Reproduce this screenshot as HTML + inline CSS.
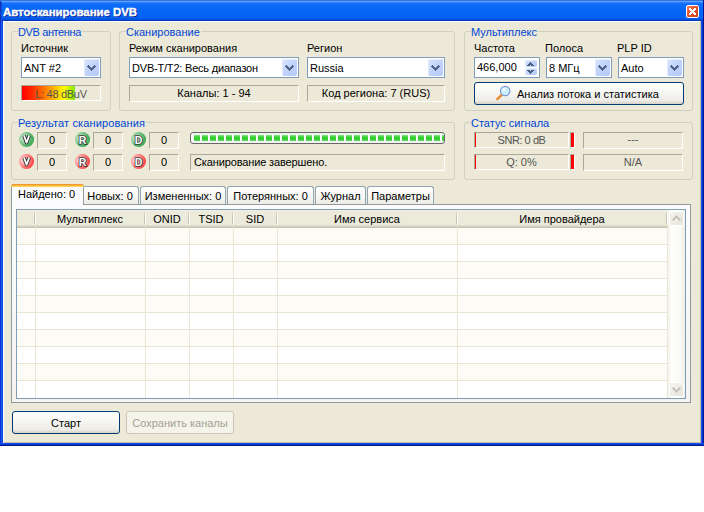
<!DOCTYPE html><html><head><meta charset="utf-8"><style>
*{margin:0;padding:0;box-sizing:border-box}
html,body{width:704px;height:512px;background:#fff;overflow:hidden;font-family:"Liberation Sans",sans-serif;font-size:11px;color:#000}
.a{position:absolute}
#win{position:absolute;left:0;top:0;width:704px;height:446px;background:#ECE9D8}
#title{left:0;top:0;width:704px;height:21px;background:linear-gradient(#3272E4 0,#3272E4 1px,#5FA2FA 1px,#5FA2FA 2px,#3585FA 2px,#0D6CF8 4px,#0866F6 10px,#0562F2 17px,#0558EA 19px,#0044CC 20px,#0038B4 21px)}
#ttext{left:3px;top:5px;font-weight:bold;font-size:11.4px;color:#fff;text-shadow:1px 1px 0 #0A1C8C;white-space:nowrap;line-height:14px;-webkit-text-stroke:0.35px #fff}
.grp{position:absolute;border:1px solid #D0D0BF;border-radius:3px}
.lg{position:absolute;color:#0046D5;background:#ECE9D8;padding:0 1px 0 0;white-space:nowrap;line-height:13px}
.lbl{position:absolute;white-space:nowrap;line-height:13px}
.combo{position:absolute;border:1px solid #7F9DB9;background:#fff}
.combo .t{position:absolute;left:2px;top:4px;white-space:nowrap;line-height:13px}
.dd{position:absolute;right:1px;top:1px;width:15px;height:17px;border-radius:2px;background:linear-gradient(135deg,#DCE6FD 0,#C3D4FB 45%,#B4CAF8 100%);box-shadow:inset 1px 1px 0 #E2EAFD}
.sunk{position:absolute;border-top:1px solid #ACA899;border-left:1px solid #ACA899;border-right:1px solid #fff;border-bottom:1px solid #fff}
.ct{text-align:center;white-space:nowrap;line-height:13px}
.btn{position:absolute;border:1px solid #003C74;border-radius:3px;background:linear-gradient(#FFFFFF 0,#F7F7F4 40%,#ECEBE6 85%,#D6D0C5 100%);text-align:center;white-space:nowrap}
.tab{position:absolute;border:1px solid #91A5B2;border-bottom:none;border-radius:3px 3px 0 0;background:linear-gradient(#FFFFFF 0,#F7F6F2 60%,#ECEBE5 100%);white-space:nowrap;line-height:13px}
</style></head><body><div id="win">
<div class="a" id="title"></div><div class="a" id="ttext">Автосканирование DVB</div>
<div class="a" style="left:686px;top:5px;width:13px;height:13px;border:1px solid #fff;border-radius:2px;background:linear-gradient(135deg,#F08060 0,#E2582E 40%,#CF3E1C 100%)"></div>
<svg class="a" style="left:689px;top:8px" width="7" height="7" viewBox="0 0 7 7"><path d="M0 0h2v1h1v1h1v-1h1v-1h2v2h-1v1h-1v1h1v1h1v2h-2v-1h-1v-1h-1v1h-1v1h-2v-2h1v-1h1v-1h-1v-1h-1z" fill="#fff"/></svg>
<div class="a" style="left:0px;top:1px;width:1px;height:20px;background:#1434B8"></div>
<div class="a" style="left:1px;top:2px;width:1px;height:19px;background:#0C50E0"></div>
<div class="a" style="left:0px;top:21px;width:1px;height:425px;background:#0A30D8"></div>
<div class="a" style="left:1px;top:21px;width:1px;height:425px;background:#1A62F0"></div>
<div class="a" style="left:2px;top:21px;width:1px;height:425px;background:#0A44E4"></div>
<div class="a" style="left:3px;top:21px;width:1px;height:422px;background:#fff"></div>
<div class="a" style="left:3px;top:21px;width:697px;height:1px;background:#fff"></div>
<div class="a" style="left:700px;top:21px;width:1px;height:422px;background:#C3BB9E"></div>
<div class="a" style="left:4px;top:442px;width:697px;height:1px;background:#C3BB9E"></div>
<div class="a" style="left:701px;top:21px;width:1px;height:425px;background:#1650F0"></div>
<div class="a" style="left:702px;top:21px;width:1px;height:425px;background:#0838C8"></div>
<div class="a" style="left:703px;top:0px;width:1px;height:446px;background:#00159A"></div>
<div class="a" style="left:0px;top:443px;width:704px;height:1px;background:#1050F0"></div>
<div class="a" style="left:0px;top:444px;width:704px;height:1px;background:#0838C8"></div>
<div class="a" style="left:0px;top:445px;width:704px;height:1px;background:#001A90"></div>
<div class="grp" style="left:11px;top:31px;width:100px;height:80px"></div><div class="lg" style="left:18px;top:26px"><span style="letter-spacing:-.38px">DVB антенна</span></div>
<div class="lbl" style="left:21px;top:42px;">Источник</div>
<div class="combo" style="left:21px;top:57px;width:80px;height:21px"><div class="t" style="top:4px">ANT #2</div><div class="dd"><svg width="9" height="6" style="position:absolute;left:3px;top:6px"><path d="M1 0h1v1h-1zM7 0h1v1h-1zM0 1h3v1h-3zM6 1h3v1h-3zM1 2h3v1h-3zM5 2h3v1h-3zM2 3h5v1h-5zM3 4h3v1h-3zM4 5h1v1h-1z" fill="#4D6185"/></svg></div></div>
<div class="sunk" style="left:21px;top:85px;width:80px;height:16px;"><div class="a" style="left:0;top:0;width:53px;height:14px;background:linear-gradient(90deg,#FF0000 0,#FF2800 18%,#FF9000 50%,#FFFF00 80%,#80E800 100%)"></div><div class="a ct" style="left:0;top:2px;width:78px;color:#545454;letter-spacing:-.3px">L: 48 dBuV</div></div>
<div class="grp" style="left:119px;top:31px;width:336px;height:80px"></div><div class="lg" style="left:126px;top:26px">Сканирование</div>
<div class="lbl" style="left:129px;top:42px;">Режим сканирования</div>
<div class="combo" style="left:129px;top:57px;width:170px;height:21px"><div class="t" style="top:4px"><span style="letter-spacing:-.2px">DVB-T/T2: Весь диапазон</span></div><div class="dd"><svg width="9" height="6" style="position:absolute;left:3px;top:6px"><path d="M1 0h1v1h-1zM7 0h1v1h-1zM0 1h3v1h-3zM6 1h3v1h-3zM1 2h3v1h-3zM5 2h3v1h-3zM2 3h5v1h-5zM3 4h3v1h-3zM4 5h1v1h-1z" fill="#4D6185"/></svg></div></div>
<div class="lbl" style="left:307px;top:42px;">Регион</div>
<div class="combo" style="left:307px;top:57px;width:138px;height:21px"><div class="t" style="top:4px">Russia</div><div class="dd"><svg width="9" height="6" style="position:absolute;left:3px;top:6px"><path d="M1 0h1v1h-1zM7 0h1v1h-1zM0 1h3v1h-3zM6 1h3v1h-3zM1 2h3v1h-3zM5 2h3v1h-3zM2 3h5v1h-5zM3 4h3v1h-3zM4 5h1v1h-1z" fill="#4D6185"/></svg></div></div>
<div class="sunk" style="left:129px;top:85px;width:170px;height:17px;"><div class="a ct" style="left:0;top:1px;width:168px">Каналы: 1 - 94</div></div>
<div class="sunk" style="left:307px;top:85px;width:138px;height:17px;"><div class="a ct" style="left:0;top:1px;width:136px">Код региона: 7 (RUS)</div></div>
<div class="grp" style="left:464px;top:31px;width:229px;height:80px"></div><div class="lg" style="left:471px;top:26px">Мультиплекс</div>
<div class="lbl" style="left:474px;top:42px;">Частота</div>
<div class="combo" style="left:474px;top:57px;width:66px;height:21px"><div class="t" style="top:3px">466,000</div><div class="a" style="left:50px;top:2px;width:12px;height:7px;border-radius:2px;background:linear-gradient(135deg,#DCE6FD 0,#C3D4FB 45%,#B4CAF8 100%);box-shadow:inset 1px 1px 0 #E2EAFD"></div><div class="a" style="left:50px;top:10px;width:12px;height:7px;border-radius:2px;background:linear-gradient(135deg,#DCE6FD 0,#C3D4FB 45%,#B4CAF8 100%);box-shadow:inset 1px 1px 0 #E2EAFD"></div><svg class="a" style="left:52px;top:4px" width="7" height="4"><path d="M3 0h1v1h-1zM2 1h3v1h-3zM1 2h5v1h-5zM0 3h3v1h-3zM4 3h3v1h-3z" fill="#4D6185"/></svg><svg class="a" style="left:52px;top:12px" width="7" height="4"><path d="M0 0h3v1h-3zM4 0h3v1h-3zM1 1h5v1h-5zM2 2h3v1h-3zM3 3h1v1h-1z" fill="#4D6185"/></svg></div>
<div class="lbl" style="left:545px;top:42px;">Полоса</div>
<div class="combo" style="left:546px;top:57px;width:66px;height:21px"><div class="t" style="top:4px">8 МГц</div><div class="dd"><svg width="9" height="6" style="position:absolute;left:3px;top:6px"><path d="M1 0h1v1h-1zM7 0h1v1h-1zM0 1h3v1h-3zM6 1h3v1h-3zM1 2h3v1h-3zM5 2h3v1h-3zM2 3h5v1h-5zM3 4h3v1h-3zM4 5h1v1h-1z" fill="#4D6185"/></svg></div></div>
<div class="lbl" style="left:617px;top:42px;">PLP ID</div>
<div class="combo" style="left:618px;top:57px;width:66px;height:21px"><div class="t" style="top:4px">Auto</div><div class="dd"><svg width="9" height="6" style="position:absolute;left:3px;top:6px"><path d="M1 0h1v1h-1zM7 0h1v1h-1zM0 1h3v1h-3zM6 1h3v1h-3zM1 2h3v1h-3zM5 2h3v1h-3zM2 3h5v1h-5zM3 4h3v1h-3zM4 5h1v1h-1z" fill="#4D6185"/></svg></div></div>
<div class="btn" style="left:474px;top:82px;width:210px;height:23px"></div>
<svg class="a" style="left:494px;top:84px" width="20" height="18"><defs><linearGradient id="hg" x1="0" y1="0" x2="1" y2="1"><stop offset="0" stop-color="#F6B060"/><stop offset="1" stop-color="#D4761E"/></linearGradient></defs><path d="M3.3 15 L7.2 11.2" stroke="url(#hg)" stroke-width="2.6" stroke-linecap="round"/><circle cx="11.2" cy="7" r="4.7" fill="#CDEFFA" stroke="#7E96D0" stroke-width="1.2"/><circle cx="9.8" cy="5.4" r="1.3" fill="#fff" opacity=".8"/></svg>
<div class="lbl" style="left:517px;top:88px;">Анализ потока и статистика</div>
<div class="grp" style="left:11px;top:122px;width:444px;height:58px"></div><div class="lg" style="left:18px;top:117px"><span style="letter-spacing:.13px">Результат сканирования</span></div>
<div class="a" style="left:19px;top:132px;width:15px;height:15px;border-radius:50%;background:radial-gradient(circle at 30% 40%,#D0ECD4 0,#8ACC96 35%,#3AAA55 70%,#17963A 100%)"></div><svg class="a" style="left:19px;top:132px" width="15" height="15"><path d="M5 3.6 L7.6 10.6 L10.2 3.6" fill="none" stroke="#333" stroke-width="3.6" stroke-linejoin="round"/><path d="M5 3.6 L7.6 10.6 L10.2 3.6" fill="none" stroke="#fff" stroke-width="1.7" stroke-linejoin="round"/></svg>
<div class="a" style="left:19px;top:154px;width:15px;height:15px;border-radius:50%;background:radial-gradient(circle at 30% 40%,#FFE0E0 0,#FF9A9A 35%,#FF4A4A 70%,#F01515 100%)"></div><svg class="a" style="left:19px;top:154px" width="15" height="15"><path d="M5 3.6 L7.6 10.6 L10.2 3.6" fill="none" stroke="#333" stroke-width="3.6" stroke-linejoin="round"/><path d="M5 3.6 L7.6 10.6 L10.2 3.6" fill="none" stroke="#fff" stroke-width="1.7" stroke-linejoin="round"/></svg>
<div class="sunk" style="left:37px;top:132px;width:30px;height:17px;"><div class="a ct" style="left:0;top:1px;width:28px">0</div></div>
<div class="sunk" style="left:37px;top:154px;width:30px;height:17px;"><div class="a ct" style="left:0;top:1px;width:28px">0</div></div>
<div class="a" style="left:75px;top:132px;width:15px;height:15px;border-radius:50%;background:radial-gradient(circle at 30% 40%,#D0ECD4 0,#8ACC96 35%,#3AAA55 70%,#17963A 100%)"></div><svg class="a" style="left:75px;top:132px" width="15" height="15"><text x="7.6" y="11.8" text-anchor="middle" font-family="Liberation Sans" font-weight="bold" font-size="10.6" fill="#fff" stroke="#333" stroke-width="1.6" paint-order="stroke">R</text></svg>
<div class="a" style="left:75px;top:154px;width:15px;height:15px;border-radius:50%;background:radial-gradient(circle at 30% 40%,#FFE0E0 0,#FF9A9A 35%,#FF4A4A 70%,#F01515 100%)"></div><svg class="a" style="left:75px;top:154px" width="15" height="15"><text x="7.6" y="11.8" text-anchor="middle" font-family="Liberation Sans" font-weight="bold" font-size="10.6" fill="#fff" stroke="#333" stroke-width="1.6" paint-order="stroke">R</text></svg>
<div class="sunk" style="left:93px;top:132px;width:30px;height:17px;"><div class="a ct" style="left:0;top:1px;width:28px">0</div></div>
<div class="sunk" style="left:93px;top:154px;width:30px;height:17px;"><div class="a ct" style="left:0;top:1px;width:28px">0</div></div>
<div class="a" style="left:131px;top:132px;width:15px;height:15px;border-radius:50%;background:radial-gradient(circle at 30% 40%,#D0ECD4 0,#8ACC96 35%,#3AAA55 70%,#17963A 100%)"></div><svg class="a" style="left:131px;top:132px" width="15" height="15"><text x="7.6" y="11.8" text-anchor="middle" font-family="Liberation Sans" font-weight="bold" font-size="10.6" fill="#fff" stroke="#333" stroke-width="1.6" paint-order="stroke">D</text></svg>
<div class="a" style="left:131px;top:154px;width:15px;height:15px;border-radius:50%;background:radial-gradient(circle at 30% 40%,#FFE0E0 0,#FF9A9A 35%,#FF4A4A 70%,#F01515 100%)"></div><svg class="a" style="left:131px;top:154px" width="15" height="15"><text x="7.6" y="11.8" text-anchor="middle" font-family="Liberation Sans" font-weight="bold" font-size="10.6" fill="#fff" stroke="#333" stroke-width="1.6" paint-order="stroke">D</text></svg>
<div class="sunk" style="left:149px;top:132px;width:30px;height:17px;"><div class="a ct" style="left:0;top:1px;width:28px">0</div></div>
<div class="sunk" style="left:149px;top:154px;width:30px;height:17px;"><div class="a ct" style="left:0;top:1px;width:28px">0</div></div>
<div class="a" style="left:190px;top:132px;width:255px;height:12px;border:1px solid #686868;border-radius:3px;background:linear-gradient(#F0F0F0,#FFFFFF 40%,#FFFFFF 60%,#EEEEEE);overflow:hidden"><div class="a" style="left:3px;top:2px;width:6px;height:6px;background:linear-gradient(#8CEB8C 0,#3DD43D 30%,#2ECC2E 60%,#5ADA5A 100%)"></div><div class="a" style="left:11px;top:2px;width:6px;height:6px;background:linear-gradient(#8CEB8C 0,#3DD43D 30%,#2ECC2E 60%,#5ADA5A 100%)"></div><div class="a" style="left:19px;top:2px;width:6px;height:6px;background:linear-gradient(#8CEB8C 0,#3DD43D 30%,#2ECC2E 60%,#5ADA5A 100%)"></div><div class="a" style="left:27px;top:2px;width:6px;height:6px;background:linear-gradient(#8CEB8C 0,#3DD43D 30%,#2ECC2E 60%,#5ADA5A 100%)"></div><div class="a" style="left:35px;top:2px;width:6px;height:6px;background:linear-gradient(#8CEB8C 0,#3DD43D 30%,#2ECC2E 60%,#5ADA5A 100%)"></div><div class="a" style="left:43px;top:2px;width:6px;height:6px;background:linear-gradient(#8CEB8C 0,#3DD43D 30%,#2ECC2E 60%,#5ADA5A 100%)"></div><div class="a" style="left:51px;top:2px;width:6px;height:6px;background:linear-gradient(#8CEB8C 0,#3DD43D 30%,#2ECC2E 60%,#5ADA5A 100%)"></div><div class="a" style="left:59px;top:2px;width:6px;height:6px;background:linear-gradient(#8CEB8C 0,#3DD43D 30%,#2ECC2E 60%,#5ADA5A 100%)"></div><div class="a" style="left:67px;top:2px;width:6px;height:6px;background:linear-gradient(#8CEB8C 0,#3DD43D 30%,#2ECC2E 60%,#5ADA5A 100%)"></div><div class="a" style="left:75px;top:2px;width:6px;height:6px;background:linear-gradient(#8CEB8C 0,#3DD43D 30%,#2ECC2E 60%,#5ADA5A 100%)"></div><div class="a" style="left:83px;top:2px;width:6px;height:6px;background:linear-gradient(#8CEB8C 0,#3DD43D 30%,#2ECC2E 60%,#5ADA5A 100%)"></div><div class="a" style="left:91px;top:2px;width:6px;height:6px;background:linear-gradient(#8CEB8C 0,#3DD43D 30%,#2ECC2E 60%,#5ADA5A 100%)"></div><div class="a" style="left:99px;top:2px;width:6px;height:6px;background:linear-gradient(#8CEB8C 0,#3DD43D 30%,#2ECC2E 60%,#5ADA5A 100%)"></div><div class="a" style="left:107px;top:2px;width:6px;height:6px;background:linear-gradient(#8CEB8C 0,#3DD43D 30%,#2ECC2E 60%,#5ADA5A 100%)"></div><div class="a" style="left:115px;top:2px;width:6px;height:6px;background:linear-gradient(#8CEB8C 0,#3DD43D 30%,#2ECC2E 60%,#5ADA5A 100%)"></div><div class="a" style="left:123px;top:2px;width:6px;height:6px;background:linear-gradient(#8CEB8C 0,#3DD43D 30%,#2ECC2E 60%,#5ADA5A 100%)"></div><div class="a" style="left:131px;top:2px;width:6px;height:6px;background:linear-gradient(#8CEB8C 0,#3DD43D 30%,#2ECC2E 60%,#5ADA5A 100%)"></div><div class="a" style="left:139px;top:2px;width:6px;height:6px;background:linear-gradient(#8CEB8C 0,#3DD43D 30%,#2ECC2E 60%,#5ADA5A 100%)"></div><div class="a" style="left:147px;top:2px;width:6px;height:6px;background:linear-gradient(#8CEB8C 0,#3DD43D 30%,#2ECC2E 60%,#5ADA5A 100%)"></div><div class="a" style="left:155px;top:2px;width:6px;height:6px;background:linear-gradient(#8CEB8C 0,#3DD43D 30%,#2ECC2E 60%,#5ADA5A 100%)"></div><div class="a" style="left:163px;top:2px;width:6px;height:6px;background:linear-gradient(#8CEB8C 0,#3DD43D 30%,#2ECC2E 60%,#5ADA5A 100%)"></div><div class="a" style="left:171px;top:2px;width:6px;height:6px;background:linear-gradient(#8CEB8C 0,#3DD43D 30%,#2ECC2E 60%,#5ADA5A 100%)"></div><div class="a" style="left:179px;top:2px;width:6px;height:6px;background:linear-gradient(#8CEB8C 0,#3DD43D 30%,#2ECC2E 60%,#5ADA5A 100%)"></div><div class="a" style="left:187px;top:2px;width:6px;height:6px;background:linear-gradient(#8CEB8C 0,#3DD43D 30%,#2ECC2E 60%,#5ADA5A 100%)"></div><div class="a" style="left:195px;top:2px;width:6px;height:6px;background:linear-gradient(#8CEB8C 0,#3DD43D 30%,#2ECC2E 60%,#5ADA5A 100%)"></div><div class="a" style="left:203px;top:2px;width:6px;height:6px;background:linear-gradient(#8CEB8C 0,#3DD43D 30%,#2ECC2E 60%,#5ADA5A 100%)"></div><div class="a" style="left:211px;top:2px;width:6px;height:6px;background:linear-gradient(#8CEB8C 0,#3DD43D 30%,#2ECC2E 60%,#5ADA5A 100%)"></div><div class="a" style="left:219px;top:2px;width:6px;height:6px;background:linear-gradient(#8CEB8C 0,#3DD43D 30%,#2ECC2E 60%,#5ADA5A 100%)"></div><div class="a" style="left:227px;top:2px;width:6px;height:6px;background:linear-gradient(#8CEB8C 0,#3DD43D 30%,#2ECC2E 60%,#5ADA5A 100%)"></div><div class="a" style="left:235px;top:2px;width:6px;height:6px;background:linear-gradient(#8CEB8C 0,#3DD43D 30%,#2ECC2E 60%,#5ADA5A 100%)"></div><div class="a" style="left:243px;top:2px;width:6px;height:6px;background:linear-gradient(#8CEB8C 0,#3DD43D 30%,#2ECC2E 60%,#5ADA5A 100%)"></div><div class="a" style="left:251px;top:2px;width:2px;height:6px;background:linear-gradient(#8CEB8C 0,#3DD43D 30%,#2ECC2E 60%,#5ADA5A 100%)"></div></div>
<div class="sunk" style="left:190px;top:154px;width:255px;height:17px;"><div class="a" style="left:3px;top:1px;white-space:nowrap;line-height:13px;letter-spacing:-.13px">Сканирование завершено.</div></div>
<div class="grp" style="left:464px;top:122px;width:229px;height:58px"></div><div class="lg" style="left:471px;top:117px">Статус сигнала</div>
<div class="sunk" style="left:474px;top:132px;width:95px;height:16px;"><div class="a" style="left:0;top:0;width:1px;height:14px;background:#FF0000"></div><div class="a ct" style="left:0;top:1px;width:93px;color:#545454;letter-spacing:-.45px">SNR: 0 dB</div></div>
<div class="sunk" style="left:570px;top:132px;width:5px;height:16px;"><div class="a" style="left:0;top:0;width:3px;height:14px;background:#FF0000"></div></div>
<div class="sunk" style="left:583px;top:132px;width:100px;height:17px;"><div class="a ct" style="left:0;top:0px;width:98px;color:#545454">---</div></div>
<div class="sunk" style="left:474px;top:154px;width:95px;height:16px;"><div class="a" style="left:0;top:0;width:1px;height:14px;background:#FF0000"></div><div class="a ct" style="left:0;top:1px;width:93px;color:#545454">Q: 0%</div></div>
<div class="sunk" style="left:570px;top:154px;width:5px;height:16px;"><div class="a" style="left:0;top:0;width:3px;height:14px;background:#FF0000"></div></div>
<div class="sunk" style="left:583px;top:154px;width:100px;height:17px;"><div class="a ct" style="left:0;top:1px;width:98px;color:#545454">N/A</div></div>
<div class="a" style="left:11px;top:204px;width:680px;height:199px;border:1px solid #919B9C;background:linear-gradient(#FCFCFE,#F4F3EE)"></div>
<div class="tab" style="left:84px;top:186px;width:55px;height:18px;text-align:center;padding-top:3px;border-left:none;border-top-left-radius:0;padding-right:2px;">Новых: 0</div>
<div class="tab" style="left:140px;top:186px;width:86px;height:18px;text-align:center;padding-top:3px;">Измененных: 0</div>
<div class="tab" style="left:227px;top:186px;width:87px;height:18px;text-align:center;padding-top:3px;">Потерянных: 0</div>
<div class="tab" style="left:315px;top:186px;width:51px;height:18px;text-align:center;padding-top:3px;">Журнал</div>
<div class="tab" style="left:367px;top:186px;width:67px;height:18px;text-align:center;padding-top:3px;">Параметры</div>
<div class="a" style="left:11px;top:184px;width:73px;height:21px;border:1px solid #919B9C;border-bottom:none;border-radius:3px 3px 0 0;background:#FCFCFE"></div>
<div class="a" style="left:11px;top:184px;width:73px;height:3px;background:linear-gradient(#E68B2C 0,#FFC73C 2px,#FFDE80 3px);border-radius:3px 3px 0 0"></div>
<div class="lbl" style="left:18px;top:188px;">Найдено: 0</div>
<div class="a" style="left:16px;top:209px;width:670px;height:190px;border:1px solid #7F9DB9;background:#fff"></div>
<div class="a" style="left:17px;top:227px;width:651px;height:17px;background:#FCFBF6"></div>
<div class="a" style="left:17px;top:244px;width:651px;height:17px;background:#FFFFFF"></div>
<div class="a" style="left:17px;top:261px;width:651px;height:17px;background:#FCFBF6"></div>
<div class="a" style="left:17px;top:278px;width:651px;height:17px;background:#FFFFFF"></div>
<div class="a" style="left:17px;top:295px;width:651px;height:17px;background:#FCFBF6"></div>
<div class="a" style="left:17px;top:312px;width:651px;height:17px;background:#FFFFFF"></div>
<div class="a" style="left:17px;top:329px;width:651px;height:17px;background:#FCFBF6"></div>
<div class="a" style="left:17px;top:346px;width:651px;height:17px;background:#FFFFFF"></div>
<div class="a" style="left:17px;top:363px;width:651px;height:17px;background:#FCFBF6"></div>
<div class="a" style="left:17px;top:380px;width:651px;height:17px;background:#FFFFFF"></div>
<div class="a" style="left:17px;top:244px;width:651px;height:1px;background:#EAE6D5"></div>
<div class="a" style="left:17px;top:261px;width:651px;height:1px;background:#EAE6D5"></div>
<div class="a" style="left:17px;top:278px;width:651px;height:1px;background:#EAE6D5"></div>
<div class="a" style="left:17px;top:295px;width:651px;height:1px;background:#EAE6D5"></div>
<div class="a" style="left:17px;top:312px;width:651px;height:1px;background:#EAE6D5"></div>
<div class="a" style="left:17px;top:329px;width:651px;height:1px;background:#EAE6D5"></div>
<div class="a" style="left:17px;top:346px;width:651px;height:1px;background:#EAE6D5"></div>
<div class="a" style="left:17px;top:363px;width:651px;height:1px;background:#EAE6D5"></div>
<div class="a" style="left:17px;top:380px;width:651px;height:1px;background:#EAE6D5"></div>
<div class="a" style="left:17px;top:210px;width:651px;height:18px;background:linear-gradient(#F1EFE2 0,#F1EFE2 1px,#EBEADB 1px,#EBEADB 15px,#E2DFCF 15px,#E2DFCF 16px,#D6D2C2 16px,#D6D2C2 17px,#C7C3B2 17px)"></div>
<div class="a" style="left:35px;top:227px;width:1px;height:171px;background:#EAE6D5"></div>
<div class="a" style="left:34px;top:213px;width:1px;height:11px;background:#C7C5B2"></div>
<div class="a" style="left:35px;top:213px;width:1px;height:11px;background:#FFFFFF"></div>
<div class="a" style="left:145px;top:227px;width:1px;height:171px;background:#EAE6D5"></div>
<div class="a" style="left:144px;top:213px;width:1px;height:11px;background:#C7C5B2"></div>
<div class="a" style="left:145px;top:213px;width:1px;height:11px;background:#FFFFFF"></div>
<div class="a" style="left:189px;top:227px;width:1px;height:171px;background:#EAE6D5"></div>
<div class="a" style="left:188px;top:213px;width:1px;height:11px;background:#C7C5B2"></div>
<div class="a" style="left:189px;top:213px;width:1px;height:11px;background:#FFFFFF"></div>
<div class="a" style="left:233px;top:227px;width:1px;height:171px;background:#EAE6D5"></div>
<div class="a" style="left:232px;top:213px;width:1px;height:11px;background:#C7C5B2"></div>
<div class="a" style="left:233px;top:213px;width:1px;height:11px;background:#FFFFFF"></div>
<div class="a" style="left:277px;top:227px;width:1px;height:171px;background:#EAE6D5"></div>
<div class="a" style="left:276px;top:213px;width:1px;height:11px;background:#C7C5B2"></div>
<div class="a" style="left:277px;top:213px;width:1px;height:11px;background:#FFFFFF"></div>
<div class="a" style="left:457px;top:227px;width:1px;height:171px;background:#EAE6D5"></div>
<div class="a" style="left:456px;top:213px;width:1px;height:11px;background:#C7C5B2"></div>
<div class="a" style="left:457px;top:213px;width:1px;height:11px;background:#FFFFFF"></div>
<div class="a" style="left:667px;top:227px;width:1px;height:171px;background:#EAE6D5"></div>
<div class="a" style="left:666px;top:213px;width:1px;height:11px;background:#C7C5B2"></div>
<div class="a" style="left:667px;top:213px;width:1px;height:11px;background:#FFFFFF"></div>
<div class="a ct" style="left:35px;top:213px;width:110px">Мультиплекс</div>
<div class="a ct" style="left:145px;top:213px;width:44px">ONID</div>
<div class="a ct" style="left:189px;top:213px;width:44px">TSID</div>
<div class="a ct" style="left:233px;top:213px;width:44px">SID</div>
<div class="a ct" style="left:277px;top:213px;width:180px">Имя сервиса</div>
<div class="a ct" style="left:457px;top:213px;width:210px">Имя провайдера</div>
<div class="a" style="left:668px;top:210px;width:17px;height:188px;background:linear-gradient(90deg,#F3F1EC 0,#FEFEFB 20%,#FBFAF6 70%,#EEEDE5 100%)"></div>
<div class="a" style="left:669px;top:211px;width:15px;height:15px;border:1px solid #fff;border-radius:2px;background:linear-gradient(135deg,#F3F3EE,#E6E5DC)"></div>
<svg class="a" style="left:672px;top:215px" width="9" height="6"><path d="M4 0h1v1h-1zM3 1h3v1h-3zM2 2h5v1h-5zM1 3h3v1h-3zM5 3h3v1h-3zM0 4h3v1h-3zM6 4h3v1h-3zM1 5h1v1h-1zM7 5h1v1h-1z" fill="#C6C5BA"/></svg>
<div class="a" style="left:669px;top:382px;width:15px;height:15px;border:1px solid #fff;border-radius:2px;background:linear-gradient(135deg,#F3F3EE,#E6E5DC)"></div>
<svg class="a" style="left:672px;top:387px" width="9" height="6"><path d="M1 0h1v1h-1zM7 0h1v1h-1zM0 1h3v1h-3zM6 1h3v1h-3zM1 2h3v1h-3zM5 2h3v1h-3zM2 3h5v1h-5zM3 4h3v1h-3zM4 5h1v1h-1z" fill="#C6C5BA"/></svg>
<div class="btn" style="left:12px;top:411px;width:108px;height:23px;line-height:23px">Старт</div>
<div class="a" style="left:126px;top:411px;width:108px;height:23px;line-height:23px;border:1px solid #C9C7BA;border-radius:3px;background:#F5F4EA;color:#A3A194;text-align:center">Сохранить каналы</div>
</div></body></html>
